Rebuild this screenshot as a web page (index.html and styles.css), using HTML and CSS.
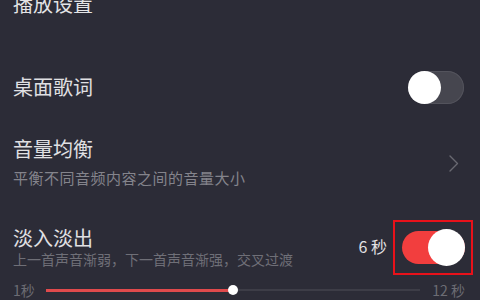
FILE: index.html
```html
<!DOCTYPE html>
<html lang="zh-CN">
<head>
    <meta charset="UTF-8">
    <meta name="viewport" content="width=device-width, initial-scale=1.0">
    <title>播放设置</title>
    <link rel="stylesheet" href="styles.css">
</head>
<body>
    <div class="page">
        <h1 class="page-title">播放设置</h1>

        <!-- 桌面歌词 -->
        <div class="row row-lyric">
            <span class="row-title">桌面歌词</span>
            <span class="switch"><span class="knob"></span></span>
        </div>

        <!-- 音量均衡 -->
        <div class="row row-balance">
            <div class="row-text">
                <div class="row-title">音量均衡</div>
                <div class="row-desc">平衡不同音频内容之间的音量大小</div>
            </div>
            <svg class="chevron" width="10" height="17" viewBox="0 0 10 17">
                <polyline points="1,1 8.5,8.5 1,16" fill="none" stroke="#696971" stroke-width="1.4" stroke-linecap="round" stroke-linejoin="round"/>
            </svg>
        </div>

        <!-- 淡入淡出 -->
        <div class="row row-fade">
            <div class="row-text">
                <div class="row-title">淡入淡出</div>
                <div class="row-desc fade-desc">上一首声音渐弱，下一首声音渐强，交叉过渡</div>
            </div>
            <div class="row-side">
                <span class="fade-value">6 秒</span>
                <div class="highlight">
                    <span class="switch switch-on"><span class="knob"></span></span>
                </div>
            </div>
        </div>

        <div class="slider">
            <span class="slider-label">1秒</span>
            <div class="slider-track">
                <div class="slider-fill" style="width: 50%;"></div>
                <span class="slider-thumb" style="left: 50%;"></span>
            </div>
            <span class="slider-label">12 秒</span>
        </div>
    </div>
</body>
</html>
```

FILE: styles.css
```css
html, body {
    margin: 0;
    padding: 0;
    height: 100%;
    overflow: hidden;
}
body {
    background-color: #2c2c37;
    font-family: "Noto Sans CJK SC", "Noto Sans", sans-serif;
    color: #e0e0e3;
}
.page {
    padding: 0 16px 0 13px;
}
.page-title {
    margin: -6px 0 0;
    font-size: 20px;
    line-height: 20px;
    font-weight: 400;
    color: #e4e4e6;
}
.row {
    display: flex;
    align-items: center;
    justify-content: space-between;
}
.row-title {
    font-size: 20px;
    line-height: 20px;
}
.row-desc {
    font-size: 15px;
    line-height: 15px;
    letter-spacing: 0.5px;
    color: #84848c;
    margin-top: 11px;
}
.row-lyric {
    margin-top: 40px;
    height: 66px;
}
.row-balance {
    height: 84px;
}
.chevron {
    margin-right: 5px;
    margin-top: 2px;
}
.row-fade {
    padding-top: 24px;
}
.fade-desc {
    font-size: 14px;
    line-height: 14px;
    letter-spacing: 0;
    margin-top: 4px;
    color: #6f6f77;
}
.row-side {
    display: flex;
    align-items: center;
    gap: 6px;
}
.fade-value {
    font-size: 16px;
    line-height: 16px;
    color: #e2e2e4;
    margin-top: -3px;
}
.highlight {
    border: 2px solid #e8111a;
    padding: 7px 6px 7px 7px;
    margin: -9px -9px -9px 0;
}

/* switches */
.switch {
    position: relative;
    display: block;
    width: 56px;
    height: 33px;
    border-radius: 17px;
    background-color: #46464f;
    box-shadow: inset 0 0 0 1px #53535c;
}
.switch .knob {
    position: absolute;
    left: 0;
    top: 0;
    width: 33px;
    height: 33px;
    border-radius: 50%;
    background-color: #ffffff;
}
.switch-on {
    width: 63px;
    height: 33px;
    margin: 2px 0;
    background-color: #f23e3e;
    box-shadow: none;
}
.switch-on .knob {
    left: auto;
    right: 0;
    top: -2px;
    width: 37px;
    height: 37px;
}

/* slider */
.slider {
    display: flex;
    align-items: center;
    height: 16px;
    margin-top: 16px;
    margin-right: -1px;
}
.slider-label {
    font-size: 14px;
    line-height: 14px;
    color: #6c6c74;
}
.slider-track {
    position: relative;
    flex: 1;
    height: 2px;
    background-color: #3d3d47;
    margin: 0 12px 0 11px;
}
.slider-fill {
    height: 3px;
    margin-top: -0.5px;
    background-color: #e04a4c;
}
.slider-thumb {
    position: absolute;
    top: 50%;
    width: 10px;
    height: 10px;
    margin: -5px 0 0 -5px;
    border-radius: 50%;
    background-color: #ffffff;
}
```
